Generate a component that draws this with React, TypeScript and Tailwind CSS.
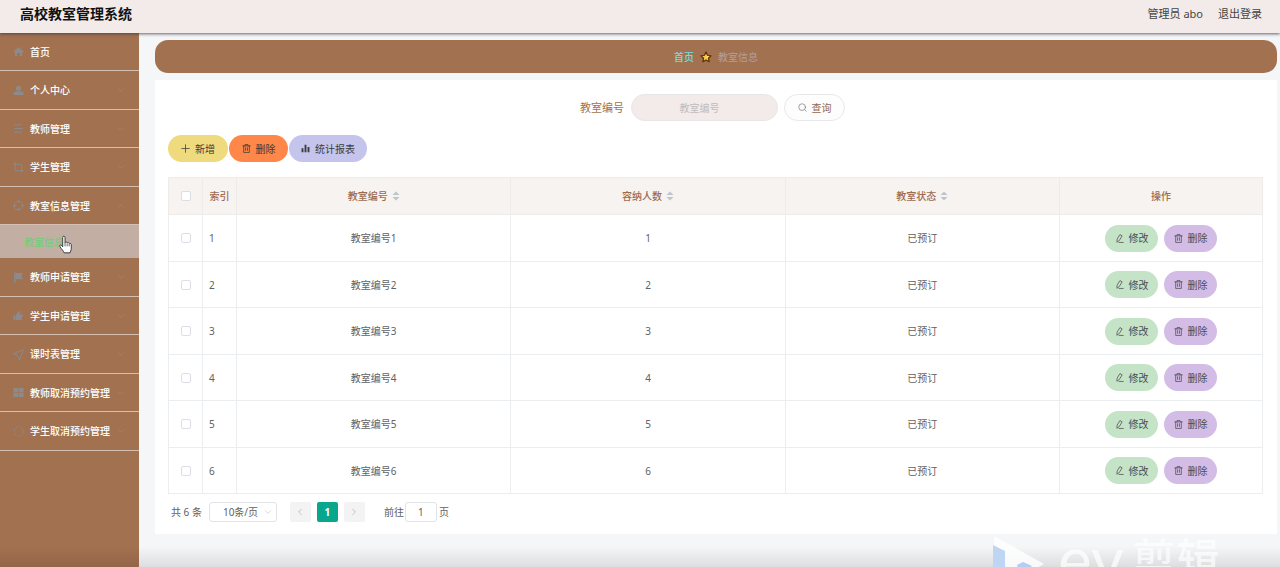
import { useState, type ReactNode } from 'react';

type IconProps = { className?: string };

function Svg({ className, children, box = 24 }: IconProps & { children: ReactNode; box?: number }) {
  return (
    <svg
      aria-hidden="true"
      viewBox={`0 0 ${box} ${box}`}
      className={className}
      fill="none"
      stroke="currentColor"
      strokeWidth="2"
      strokeLinecap="round"
      strokeLinejoin="round"
    >
      {children}
    </svg>
  );
}

const menuIcons: Record<string, ReactNode> = {
  home: <path d="M12 2 1 12v1h3v9h5v-7h6v7h5v-9h3v-1Z" fill="currentColor" stroke="none" />,
  user: (
    <g fill="currentColor" stroke="none">
      <circle cx="12" cy="7" r="5.5" />
      <path d="M1 22v-4c0-3 4-4.500 7-4.500h8c3 0 7 1.500 7 4.500v4Z" />
    </g>
  ),
  list: <path d="M3 4h15M3 12h18M3 20h15" />,
  crop: <path d="M5 1v18h18M1 5h18v18" />,
  aim: (
    <>
      <circle cx="12" cy="12" r="9.500" />
      <path d="M12 1v5M12 18v5M1 12h5M18 12h5" />
    </>
  ),
  flag: (
    <>
      <path d="M4 2v21" strokeWidth="3" />
      <path d="M5 2h17l-4 7 4 7H5Z" fill="currentColor" stroke="none" />
    </>
  ),
  thumb: (
    <g fill="currentColor" stroke="none">
      <path d="M1 12h4v10H1Z" />
      <path d="M6 11 12 3c3-1 4 1 3 4l-1 3h8v4h-3v8H6Z" />
    </g>
  ),
  send: <path d="M22 2 1 10l9 4 4 9Z" />,
  grid: (
    <g fill="currentColor" stroke="none">
      <rect x="1" y="2" width="10.500" height="9.500" />
      <rect x="12.500" y="2" width="10.500" height="9.500" />
      <rect x="1" y="12.500" width="10.500" height="9.500" />
      <rect x="12.500" y="12.500" width="10.500" height="9.500" />
    </g>
  ),
  ring: <circle cx="12" cy="12" r="10" strokeDasharray="6 4.400" />,
};

const TrashIcon = ({ className }: IconProps) => (
  <Svg className={className}>
    <path d="M2 5h20M8 5V1.500h8V5M4.500 5v17.500h15V5M9.500 10v7M14.500 10v7" />
  </Svg>
);
const EditIcon = ({ className }: IconProps) => (
  <Svg className={className}>
    <path d="m14 2 5 3-8 13-6 4 .5-7ZM11 22.500h11" />
  </Svg>
);
const PlusIcon = ({ className }: IconProps) => (
  <Svg className={className}>
    <path d="M12 2v20M2 12h20" />
  </Svg>
);
const ChartIcon = ({ className }: IconProps) => (
  <Svg className={className}>
    <path d="M4 11v11M12 2v20M20 8v14" strokeWidth="5" strokeLinecap="butt" />
  </Svg>
);
const SearchIcon = ({ className }: IconProps) => (
  <Svg className={className}>
    <circle cx="11" cy="11" r="9" />
    <path d="m18 18 4 4" />
  </Svg>
);
const Chevron = ({ className }: IconProps) => (
  <Svg className={className}>
    <path d="m4 8 8 8 8-8" />
  </Svg>
);
const SortIcon = () => (
  <svg aria-hidden="true" viewBox="0 0 8 10" className="h-[10px] w-2 fill-[#bfc3cb]">
    <path d="M4 0.500 7.500 4h-7ZM4 9.500 7.500 6h-7Z" />
  </svg>
);
const StarIcon = () => (
  <svg aria-hidden="true" viewBox="0 0 24 24" className="size-3">
    <path
      d="m12 2 3 6.500 7 1-5 5 1.200 7L12 18l-6.200 3.500 1.200-7-5-5 7-1Z"
      fill="#fbc64a"
      stroke="#5c3306"
      strokeWidth="2.500"
      strokeLinejoin="round"
    />
    <path d="m12 7 1.500 3.500 3.500.5-2.500 2.500" fill="#fff0b0" />
  </svg>
);
const HandCursor = () => (
  <svg aria-hidden="true" viewBox="0 0 14 20" className="absolute top-[10px] left-[59px] h-[19px] w-[13px]">
    <path
      d="M4 12.500V2.500c0-2 2.500-2 2.500 0V8c.3-1 2.200-.8 2.300.4.500-.8 2-.5 2.200.6.600-.6 2.200-.2 2.200 1.200V14c0 3-1 3.500-1.400 5H5.500C5 17 2.500 15 1 12.200c-.8-1.500 1-2.200 1.800-1.200Z"
      fill="#fff"
      stroke="#333"
      strokeWidth="1"
      strokeLinejoin="round"
    />
    <path d="M6.500 8v4M8.800 9v3M11 9.500V12" stroke="#333" strokeWidth=".8" />
  </svg>
);

const menu = [
  { label: '首页', icon: 'home' },
  { label: '个人中心', icon: 'user', group: true },
  { label: '教师管理', icon: 'list', group: true },
  { label: '学生管理', icon: 'crop', group: true },
  { label: '教室信息管理', icon: 'aim', group: true, child: '教室信息' },
  { label: '教师申请管理', icon: 'flag', group: true },
  { label: '学生申请管理', icon: 'thumb', group: true },
  { label: '课时表管理', icon: 'send', group: true },
  { label: '教师取消预约管理', icon: 'grid', group: true },
  { label: '学生取消预约管理', icon: 'ring', group: true },
];

const rooms = [1, 2, 3, 4, 5, 6].map((n) => ({ id: n, name: `教室编号${n}`, seats: n, status: '已预订' }));

function Sidebar() {
  return (
    <nav className="w-[139px] shrink-0 bg-[#a27150] text-[10px] font-medium text-white">
      <ul>
        {menu.map((item) => (
          <li key={item.label} className="group">
            <a
              href="#"
              className="flex h-[38px] items-center border-b border-[#d6bfb1] pr-[14px] pl-[13px] group-even:h-[39px]"
            >
              <Svg className="mr-[6px] size-[11px] text-[#8b8a8d]">{menuIcons[item.icon]}</Svg>
              <span className="flex-1">{item.label}</span>
              {item.group && (
                <Chevron className={item.child ? 'size-2 rotate-180 text-[#b0836a]' : 'size-2 text-[#b0836a]'} />
              )}
            </a>
            {item.child && (
              <a
                href="#"
                className="relative flex h-[33px] items-center bg-[#c3aea4] pl-6 font-normal text-[#6fcf74]"
              >
                {item.child}
                <HandCursor />
              </a>
            )}
          </li>
        ))}
      </ul>
    </nav>
  );
}

const checkbox =
  'block size-[10px] appearance-none rounded-[2px] border border-[#dcdfe6] bg-white checked:bg-[#00a78e]';
const pill = 'flex h-[27px] items-center justify-center gap-[5px] rounded-full';
const head = 'border border-[#efebe8] font-medium';
const cell = 'border border-[#ebeef0]';

function RoomTable() {
  const [selected, setSelected] = useState<number[]>([]);
  const toggle = (id: number) =>
    setSelected((s) => (s.includes(id) ? s.filter((x) => x !== id) : [...s, id]));
  return (
    <table className="mt-[15px] w-full table-fixed border-collapse text-center">
      <colgroup>
        <col className="w-[34px]" />
        <col className="w-[34px]" />
        <col />
        <col />
        <col />
        <col className="w-[203px]" />
      </colgroup>
      <thead className="bg-[#f6f3f0] text-[#9c6b50]">
        <tr className="h-[37px]">
          <th className={head}>
            <input
              type="checkbox"
              aria-label="全选"
              className={`${checkbox} mx-auto`}
              checked={selected.length === rooms.length}
              onChange={(e) => setSelected(e.target.checked ? rooms.map((r) => r.id) : [])}
            />
          </th>
          <th className={head}>索引</th>
          {['教室编号', '容纳人数', '教室状态'].map((title) => (
            <th key={title} className={head}>
              <span className="inline-flex items-center gap-1">
                {title}
                <SortIcon />
              </span>
            </th>
          ))}
          <th className={head}>操作</th>
        </tr>
      </thead>
      <tbody>
        {rooms.map((r) => (
          <tr key={r.id} className="h-[46px] odd:h-[47px]">
            <td className={cell}>
              <input
                type="checkbox"
                aria-label={r.name}
                className={`${checkbox} mx-auto`}
                checked={selected.includes(r.id)}
                onChange={() => toggle(r.id)}
              />
            </td>
            <td className={`${cell} pl-[6px] text-left`}>{r.id}</td>
            <td className={cell}>{r.name}</td>
            <td className={cell}>{r.seats}</td>
            <td className={cell}>{r.status}</td>
            <td className={cell}>
              <div className="flex justify-center gap-[6px] text-[#4c4c50]">
                <button type="button" className={`${pill} w-[53px] bg-[#c5e3c6]`}>
                  <EditIcon className="size-[9px]" />
                  修改
                </button>
                <button type="button" className={`${pill} w-[53px] bg-[#d3bde6]`}>
                  <TrashIcon className="size-[9px]" />
                  删除
                </button>
              </div>
            </td>
          </tr>
        ))}
      </tbody>
    </table>
  );
}

function Pagination() {
  return (
    <div className="mt-2 flex h-5 items-center pl-[3px]">
      <span>共 6 条</span>
      <span className="relative ml-[7px]">
        <select
          aria-label="每页条数"
          className="block h-5 w-[68px] appearance-none rounded-[3px] border border-[#e0e3e8] bg-white pl-[13px]"
        >
          <option>10条/页</option>
          <option>20条/页</option>
        </select>
        <Chevron className="pointer-events-none absolute top-[6px] right-[5px] size-2 text-[#c0c4cc]" />
      </span>
      <button type="button" aria-label="上一页" className="ml-[13px] grid h-5 w-[21px] place-items-center rounded-[2px] bg-[#f3f3f4]">
        <Chevron className="size-2 rotate-90 text-[#a4a8af]" />
      </button>
      <button type="button" className="ml-[6px] h-5 w-[21px] rounded-[2px] bg-[#08a78d] font-bold text-white">
        1
      </button>
      <button type="button" aria-label="下一页" className="ml-[6px] grid h-5 w-[21px] place-items-center rounded-[2px] bg-[#f3f3f4]">
        <Chevron className="size-2 -rotate-90 text-[#a4a8af]" />
      </button>
      <label className="ml-[19px] flex items-center gap-[1px]">
        前往
        <input
          type="text"
          defaultValue="1"
          className="h-5 w-8 rounded-[3px] border border-[#e0e3e8] bg-white text-center"
        />
        <span className="ml-[1px]">页</span>
      </label>
    </div>
  );
}

function Watermark() {
  return (
    <div className="pointer-events-none absolute inset-x-0 bottom-0 flex h-8 items-start justify-end overflow-hidden bg-linear-to-b from-transparent from-35% to-black/10 pr-[60px]">
      <svg aria-hidden="true" viewBox="0 0 56 60" className="mr-3 h-[60px] w-14 shrink-0">
        <path d="M4 1v56l50-28Z" fill="#fff" fillOpacity=".8" />
        <path d="M3 10v46h12V16Z" fill="#bfd5f4" />
        <path d="m27 30 6-3 9 4-12 9Z" fill="#b3cdf3" />
      </svg>
      <span className="font-['Lato'] text-[64px] leading-[48px] text-white/70">ev</span>
      <span className="ml-2 text-[44px] leading-[48px] font-medium text-white/70">剪辑</span>
    </div>
  );
}

export default function App() {
  return (
    <div className="relative flex min-h-screen flex-col bg-[#f4f6f8] font-['Noto_Sans','Noto_Sans_CJK_SC',sans-serif] text-[10px] leading-4 text-[#606266]">
      <header className="relative z-10 flex h-[33px] items-center justify-between bg-[#f3ebe9] pr-[18px] pb-[6px] pl-5 shadow-[0_1px_3px_rgba(60,60,70,0.8)]">
        <h1 className="text-[14px] leading-5 font-bold text-[#111]">高校教室管理系统</h1>
        <div className="flex items-center gap-[15px] text-[11px] text-[#444]">
          <span>管理员 abo</span>
          <a href="#">退出登录</a>
        </div>
      </header>
      <div className="flex flex-1">
        <Sidebar />
        <main className="min-w-0 flex-1 pt-[7px] pr-[3px] pb-8 pl-4">
          <div className="flex h-[33px] items-center justify-center gap-[6px] rounded-[13px] bg-[#a27150]">
            <a href="#" className="font-medium text-[#6fdfe2]">
              首页
            </a>
            <StarIcon />
            <span className="text-[#b2a09a]">教室信息</span>
          </div>
          <section className="mt-[7px] bg-white pt-[14px] pr-[14px] pb-3 pl-[13px]">
            <form className="flex items-center justify-center pr-[6px]" onSubmit={(e) => e.preventDefault()}>
              <label htmlFor="room" className="mr-[7px] text-[11px] text-[#a27150]">
                教室编号
              </label>
              <input
                id="room"
                type="text"
                placeholder="教室编号"
                className="h-[27px] w-[147px] rounded-full border border-[#e9e5e4] bg-[#f3ebe9] pr-[10px] text-center placeholder:text-[#bfbcbe]"
              />
              <button
                type="submit"
                className={`${pill} ml-[6px] w-[61px] border border-[#e8e8e8] bg-[#fdfdfd] text-[#94674c]`}
              >
                <SearchIcon className="size-[9px] text-[#808080]" />
                查询
              </button>
            </form>
            <div className="mt-[14px] flex gap-px text-[#3b3b3b]">
              <button type="button" className={`${pill} w-[60px] bg-[#f0da7e]`}>
                <PlusIcon className="size-[9px]" />
                新增
              </button>
              <button type="button" className={`${pill} w-[59px] bg-[#ff874a]`}>
                <TrashIcon className="size-[9px]" />
                删除
              </button>
              <button type="button" className={`${pill} w-[78px] bg-[#c5c4ec]`}>
                <ChartIcon className="size-[9px]" />
                统计报表
              </button>
            </div>
            <RoomTable />
            <Pagination />
          </section>
        </main>
      </div>
      <Watermark />
    </div>
  );
}
